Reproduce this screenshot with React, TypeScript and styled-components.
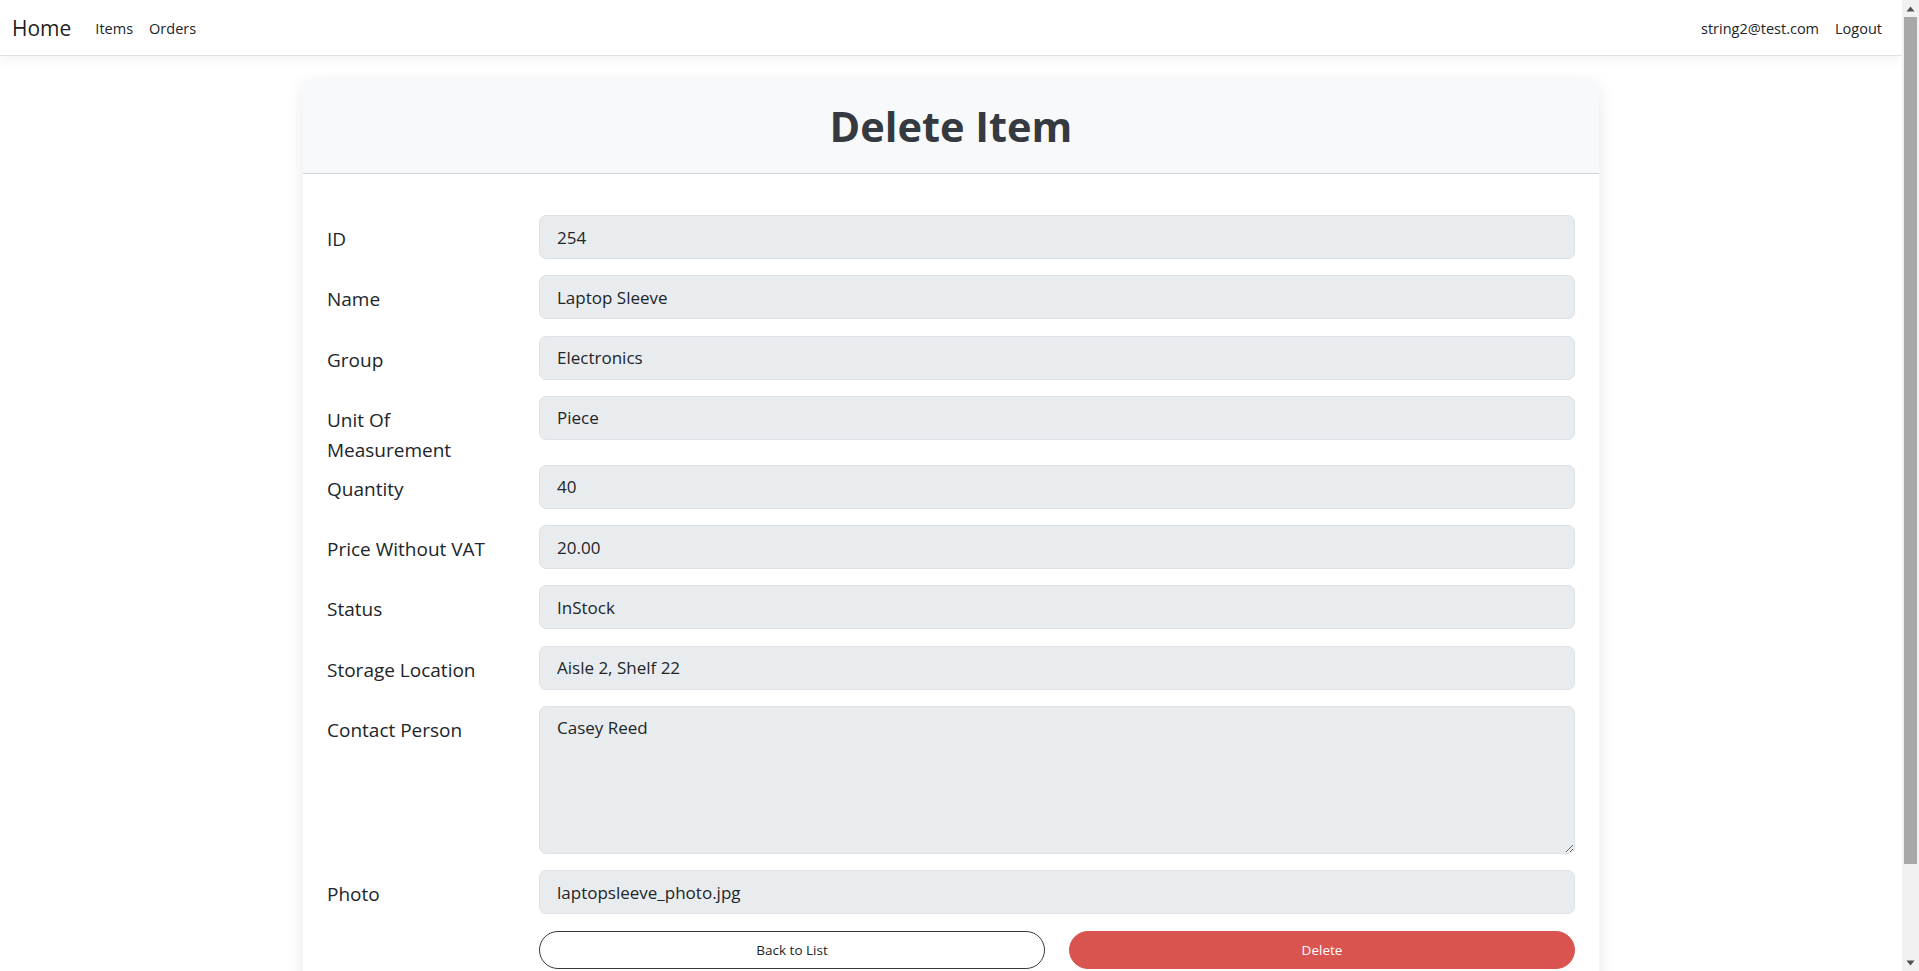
import React from "react";
import styled, { createGlobalStyle } from "styled-components";

const GlobalStyle = createGlobalStyle`
  html, body {
    margin: 0;
    padding: 0;
    background: #ffffff;
    overflow: hidden;
  }
  body {
    font-family: "Open Sans", "Noto Sans", "Liberation Sans", sans-serif;
    color: #212529;
    font-size: 16px;
    line-height: 1.5;
  }
  * { box-sizing: border-box; }
`;

const Viewport = styled.div`
  display: flex;
  height: 100vh;
  overflow: hidden;
`;

const Page = styled.div`
  flex: 1;
  min-width: 0;
  overflow: hidden;
`;

const ScrollTrack = styled.div`
  width: 17px;
  flex: 0 0 17px;
  background: #f1f1f1;
  display: flex;
  flex-direction: column;
  align-items: center;
`;

const ScrollArrow = styled.div`
  width: 17px;
  height: 17px;
  display: flex;
  align-items: center;
  justify-content: center;
  flex: 0 0 17px;
`;

const ScrollThumb = styled.div`
  width: 13px;
  height: 847px;
  background: #a8a8a8;
`;

const ScrollSpacer = styled.div`
  flex: 1;
`;

const NavBar = styled.header`
  display: flex;
  align-items: center;
  height: 56px;
  padding: 2px 12px 0;
  background: #ffffff;
  border-bottom: 1px solid #dee2e6;
  box-shadow: 0 0.25rem 0.75rem rgba(0, 0, 0, 0.05);
`;

const Brand = styled.a`
  font-size: 21px;
  color: rgba(0, 0, 0, 0.9);
  margin-right: 16px;
  text-decoration: none;
`;

const NavGroup = styled.nav<{ $end?: boolean }>`
  display: flex;
  align-items: center;
  margin-left: ${(p) => (p.$end ? "auto" : "0")};
`;

const NavLink = styled.a`
  padding: 8px;
  font-size: 14.5px;
  color: #212529;
  text-decoration: none;
`;

const Container = styled.main`
  max-width: 1320px;
  margin: 24px auto 0;
  padding: 0 12px 48px;
`;

const Card = styled.section`
  background: #ffffff;
  border-radius: 8px;
  box-shadow: 0 4px 18px rgba(0, 0, 0, 0.09);
  overflow: hidden;
`;

const CardHeader = styled.div`
  background: #f8f9fa;
  border-bottom: 1px solid #ced4da;
  padding: 22px 16px 23px;
  text-align: center;
`;

const Title = styled.h1`
  margin: 0;
  font-size: 41.5px;
  line-height: 48px;
  font-weight: 700;
  color: #343a40;
`;

const CardBody = styled.div`
  padding: 41px 24px 24px;
`;

const FieldRow = styled.div`
  display: grid;
  grid-template-columns: 188px 1fr;
  column-gap: 24px;
`;

const Label = styled.label`
  font-size: 19px;
  line-height: 30px;
  padding: 9px 0 0;
  color: #212529;
`;

const inputBase = `
  display: block;
  width: 100%;
  margin: 0 0 16.3px;
  padding: 0 17px;
  font-family: inherit;
  font-size: 17px;
  color: #212529;
  background: #e9ecef;
  border: 1px solid #dee2e6;
  border-radius: 7px;
  outline: none;
`;

const TextInput = styled.input`
  ${inputBase}
  height: 44px;
  line-height: 24px;
`;

const TextArea = styled.textarea`
  ${inputBase}
  height: 148px;
  padding-top: 9px;
  padding-bottom: 9px;
  line-height: 24px;
  resize: vertical;
`;

const ButtonRow = styled.div`
  display: grid;
  grid-template-columns: 1fr 1fr;
  column-gap: 24px;
  margin-left: 212px;
`;

const PillButton = styled.button<{ $danger?: boolean }>`
  height: 38px;
  border-radius: 19px;
  font-family: inherit;
  font-size: 13.5px;
  cursor: pointer;
  background: ${(p) => (p.$danger ? "#d9534f" : "#ffffff")};
  color: ${(p) => (p.$danger ? "#ffffff" : "#212529")};
  border: 1px solid ${(p) => (p.$danger ? "#d9534f" : "#343a40")};
`;

type Field = { label: string; value: string; multiline?: boolean };

const fields: Field[] = [
  { label: "ID", value: "254" },
  { label: "Name", value: "Laptop Sleeve" },
  { label: "Group", value: "Electronics" },
  { label: "Unit Of Measurement", value: "Piece" },
  { label: "Quantity", value: "40" },
  { label: "Price Without VAT", value: "20.00" },
  { label: "Status", value: "InStock" },
  { label: "Storage Location", value: "Aisle 2, Shelf 22" },
  { label: "Contact Person", value: "Casey Reed", multiline: true },
  { label: "Photo", value: "laptopsleeve_photo.jpg" },
];

const Triangle = ({ up }: { up?: boolean }) => (
  <svg width="9" height="6" viewBox="0 0 9 6" aria-hidden="true">
    <path d={up ? "M4.5 0.5 L8.5 5.5 L0.5 5.5 Z" : "M0.5 0.5 L8.5 0.5 L4.5 5.5 Z"} fill="#505050" />
  </svg>
);

export default function App() {
  return (
    <>
      <GlobalStyle />
      <Viewport>
        <Page>
          <NavBar>
            <Brand href="#">Home</Brand>
            <NavGroup>
              <NavLink href="#">Items</NavLink>
              <NavLink href="#">Orders</NavLink>
            </NavGroup>
            <NavGroup $end>
              <NavLink href="#">string2@test.com</NavLink>
              <NavLink href="#">Logout</NavLink>
            </NavGroup>
          </NavBar>
          <Container>
            <Card>
              <CardHeader>
                <Title>Delete Item</Title>
              </CardHeader>
              <CardBody>
                {fields.map((f) => (
                  <FieldRow key={f.label}>
                    <Label>{f.label}</Label>
                    {f.multiline ? (
                      <TextArea readOnly defaultValue={f.value} />
                    ) : (
                      <TextInput readOnly defaultValue={f.value} />
                    )}
                  </FieldRow>
                ))}
                <ButtonRow>
                  <PillButton type="button">Back to List</PillButton>
                  <PillButton type="button" $danger>
                    Delete
                  </PillButton>
                </ButtonRow>
              </CardBody>
            </Card>
          </Container>
        </Page>
        <ScrollTrack>
          <ScrollArrow>
            <Triangle up />
          </ScrollArrow>
          <ScrollThumb />
          <ScrollSpacer />
          <ScrollArrow>
            <Triangle />
          </ScrollArrow>
        </ScrollTrack>
      </Viewport>
    </>
  );
}
